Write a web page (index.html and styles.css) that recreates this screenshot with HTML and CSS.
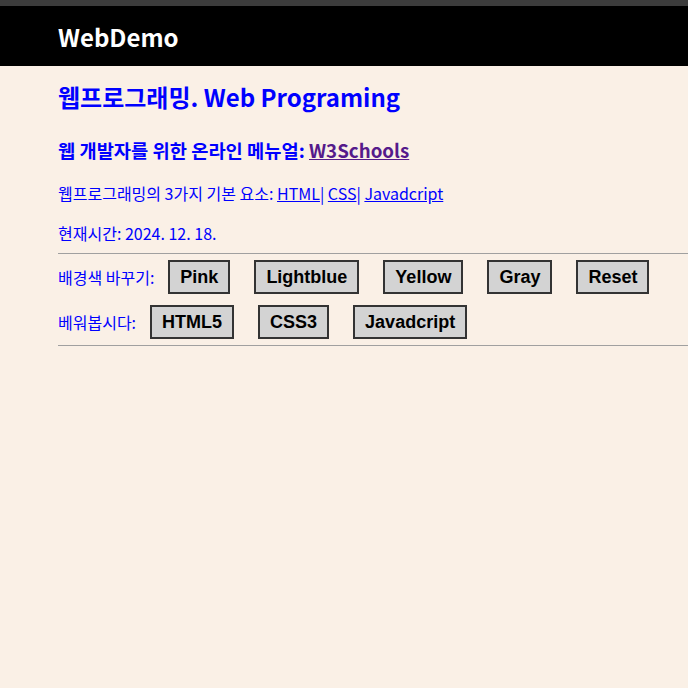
FILE: index.html
```html
<!DOCTYPE html>
<html lang="en">
<head>
    <meta charset="UTF-8">
    <meta name="viewport" content="width=device-width, initial-scale=1.0">
    <title>WebDemo</title>
    <link rel="stylesheet" href="styles.css">
</head>
<body>
    <div class="topbar"></div>
    <div class="header">
        <div class="logo">WebDemo</div>
    </div>

    <div class="content">
        <h1 class="title">웹프로그래밍. Web Programing</h1>
        <h2 class="subtitle">웹 개발자를 위한 온라인 메뉴얼: <a href="#" class="visited">W3Schools</a></h2>
        <p class="text">웹프로그래밍의 3가지 기본 요소: <a href="#">HTML</a>| <a href="#">CSS</a>| <a href="#">Javadcript</a></p>
        <p class="text">현재시간: 2024. 12. 18.</p>

        <hr class="line">

        <div class="row">
            <span class="row-label">배경색 바꾸기:</span>
            <button class="btn">Pink</button>
            <button class="btn">Lightblue</button>
            <button class="btn">Yellow</button>
            <button class="btn">Gray</button>
            <button class="btn">Reset</button>
        </div>
        <div class="row">
            <span class="row-label">베워봅시다:</span>
            <button class="btn">HTML5</button>
            <button class="btn">CSS3</button>
            <button class="btn">Javadcript</button>
        </div>

        <hr class="line">
    </div>
</body>
</html>
```

FILE: styles.css
```css
* {
    margin: 0;
    padding: 0;
    box-sizing: border-box;
}

body {
    background: #faf0e6;
    font-family: "Noto Sans CJK KR", "Noto Sans", sans-serif;
    color: #0000ff;
}

.topbar {
    height: 6px;
    background: #3c3c3c;
}

.header {
    height: 60px;
    background: #000;
    padding-left: 58px;
    display: flex;
    align-items: center;
}

.logo {
    color: white;
    font-size: 24px;
    font-weight: 700;
}

.content {
    padding-left: 58px;
}

.title {
    font-size: 24px;
    line-height: 32px;
    font-weight: 700;
    margin-top: 15px;
}

.subtitle {
    font-size: 18.72px;
    line-height: 26px;
    font-weight: 700;
    margin-top: 24px;
}

.text {
    font-size: 16px;
    line-height: 24px;
    margin-top: 16px;
}

.subtitle + .text {
    margin-top: 18px;
}

a {
    color: #0000ff;
}

a.visited {
    color: #551a8b;
}

.line {
    border: none;
    border-top: 1px solid #a0a0a0;
    margin-top: 8px;
}

.row {
    display: flex;
    align-items: center;
    gap: 24px;
    margin-top: 11px;
}

.line + .row {
    margin-top: 6px;
}

.row + .line {
    margin-top: 6px;
}

.row-label {
    font-size: 16px;
    margin-right: -10px;
}

.btn {
    font-family: "Liberation Sans", Arial, sans-serif;
    font-size: 18px;
    font-weight: 700;
    line-height: 20px;
    padding: 5px 10px;
    background: #d3d3d3;
    border: 2px solid #333;
    color: #000;
}
```
